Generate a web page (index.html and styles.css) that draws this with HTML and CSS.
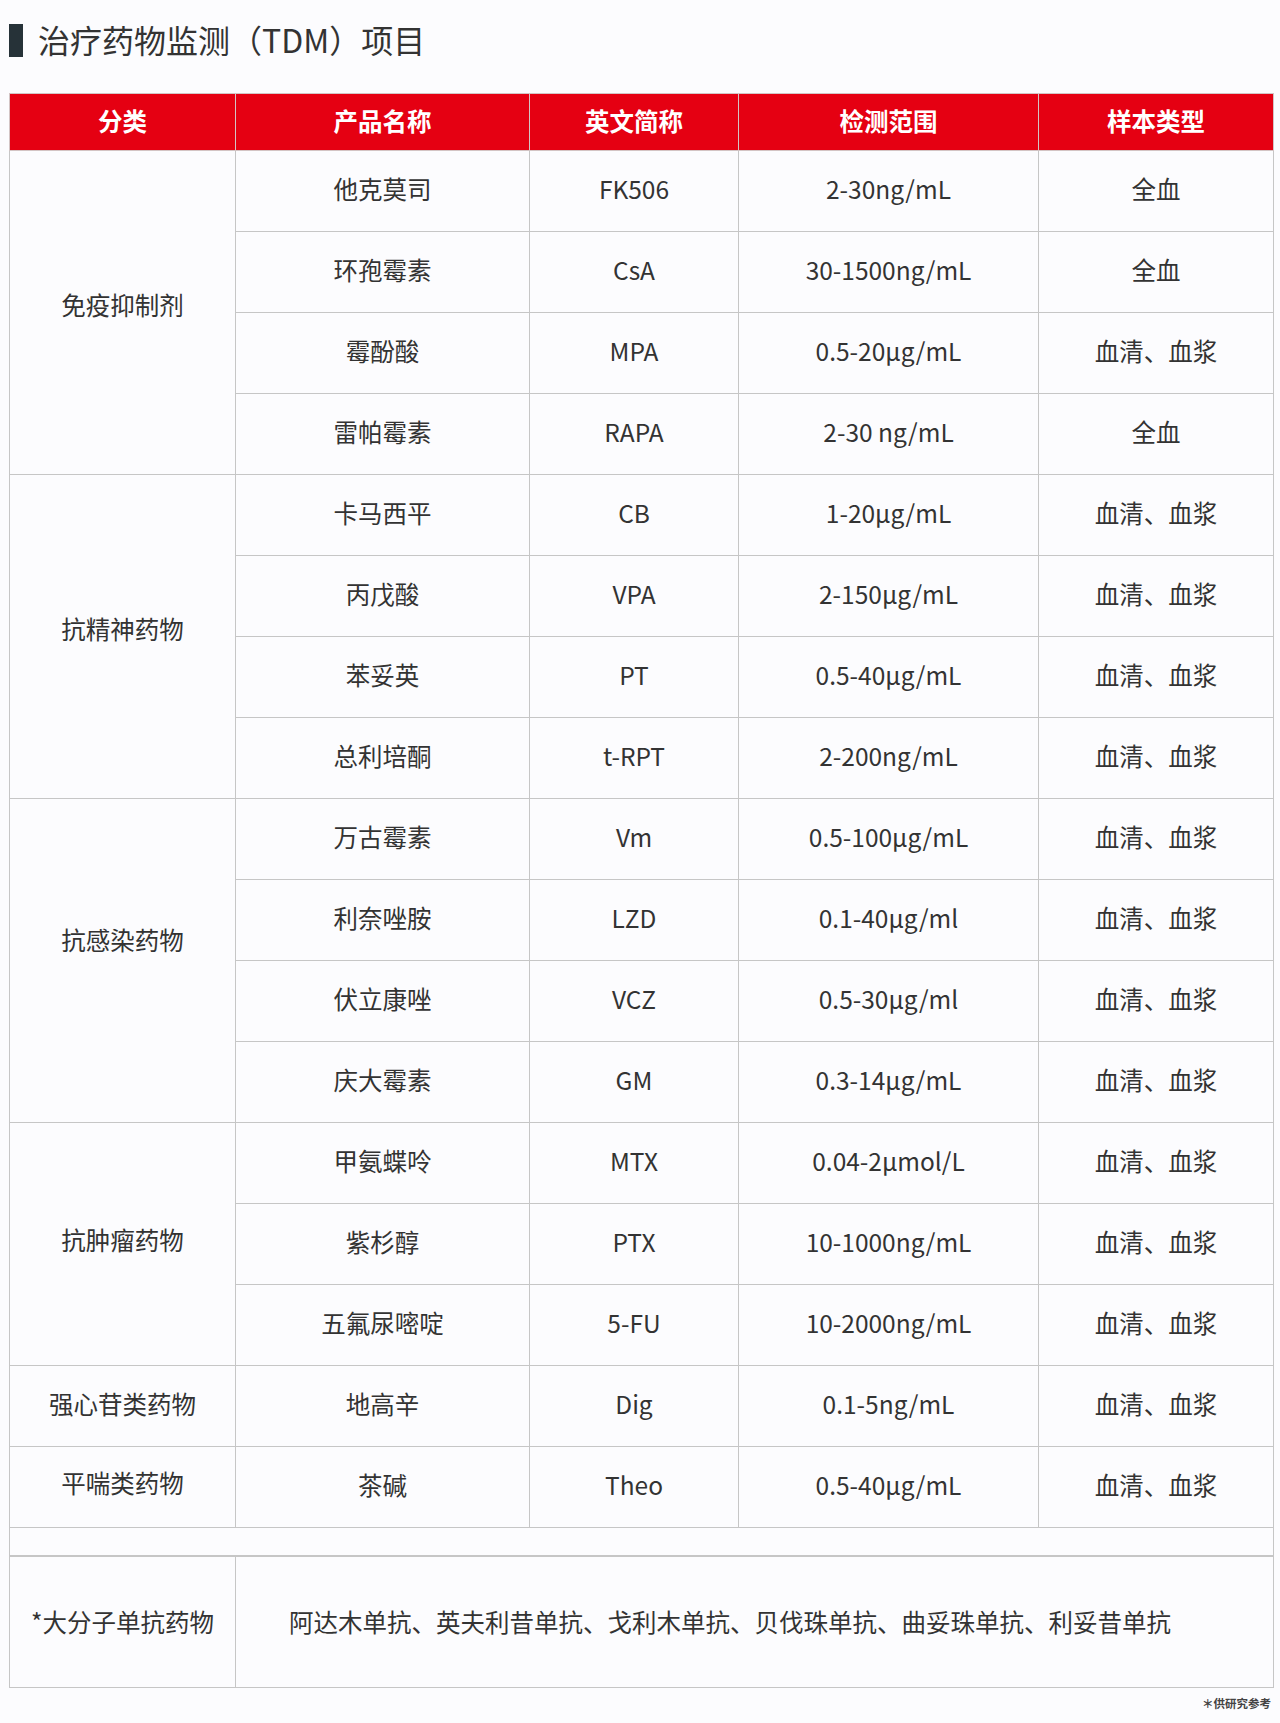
FILE: index.html
```html
<!DOCTYPE html>
<html lang="zh-CN">
<head>
<meta charset="utf-8">
<title>治疗药物监测（TDM）项目</title>
<link rel="stylesheet" href="styles.css">
</head>
<body>
<div class="page">
  <h1 class="title"><span class="title-bar"></span><span class="title-text">治疗药物监测（TDM）项目</span></h1>
  <table class="tdm">
    <colgroup>
      <col class="c1"><col class="c2"><col class="c3"><col class="c4"><col class="c5">
    </colgroup>
    <thead>
      <tr class="head"><th>分类</th><th>产品名称</th><th>英文简称</th><th>检测范围</th><th>样本类型</th></tr>
    </thead>
    <tbody>
      <tr class="row"><td rowspan="4" class="cat cat-a">免疫抑制剂</td><td>他克莫司</td><td>FK506</td><td>2-30ng/mL</td><td>全血</td></tr>
      <tr class="row"><td>环孢霉素</td><td>CsA</td><td>30-1500ng/mL</td><td>全血</td></tr>
      <tr class="row"><td>霉酚酸</td><td>MPA</td><td>0.5-20μg/mL</td><td>血清、血浆</td></tr>
      <tr class="row"><td>雷帕霉素</td><td>RAPA</td><td>2-30 ng/mL</td><td>全血</td></tr>
      <tr class="row"><td rowspan="4" class="cat cat-b">抗精神药物</td><td>卡马西平</td><td>CB</td><td>1-20μg/mL</td><td>血清、血浆</td></tr>
      <tr class="row"><td>丙戊酸</td><td>VPA</td><td>2-150μg/mL</td><td>血清、血浆</td></tr>
      <tr class="row"><td>苯妥英</td><td>PT</td><td>0.5-40μg/mL</td><td>血清、血浆</td></tr>
      <tr class="row"><td>总利培酮</td><td>t-RPT</td><td>2-200ng/mL</td><td>血清、血浆</td></tr>
      <tr class="row"><td rowspan="4" class="cat cat-c">抗感染药物</td><td>万古霉素</td><td>Vm</td><td>0.5-100μg/mL</td><td>血清、血浆</td></tr>
      <tr class="row"><td>利奈唑胺</td><td>LZD</td><td>0.1-40μg/ml</td><td>血清、血浆</td></tr>
      <tr class="row"><td>伏立康唑</td><td>VCZ</td><td>0.5-30μg/ml</td><td>血清、血浆</td></tr>
      <tr class="row"><td>庆大霉素</td><td>GM</td><td>0.3-14μg/mL</td><td>血清、血浆</td></tr>
      <tr class="row"><td rowspan="3" class="cat cat-d">抗肿瘤药物</td><td>甲氨蝶呤</td><td>MTX</td><td>0.04-2μmol/L</td><td>血清、血浆</td></tr>
      <tr class="row"><td>紫杉醇</td><td>PTX</td><td>10-1000ng/mL</td><td>血清、血浆</td></tr>
      <tr class="row"><td>五氟尿嘧啶</td><td>5-FU</td><td>10-2000ng/mL</td><td>血清、血浆</td></tr>
      <tr class="row"><td class="cat">强心苷类药物</td><td>地高辛</td><td>Dig</td><td>0.1-5ng/mL</td><td>血清、血浆</td></tr>
      <tr class="row"><td class="cat cat-f">平喘类药物</td><td>茶碱</td><td>Theo</td><td>0.5-40μg/mL</td><td>血清、血浆</td></tr>
      <tr class="spacer"><td colspan="5"></td></tr>
      <tr class="big"><td class="cat">*大分子单抗药物</td><td colspan="4" class="list">阿达木单抗、英夫利昔单抗、戈利木单抗、贝伐珠单抗、曲妥珠单抗、利妥昔单抗</td></tr>
    </tbody>
  </table>
  <p class="note">＊供研究参考</p>
</div>
</body>
</html>
```

FILE: styles.css
```css
html, body {
  margin: 0;
  padding: 0;
  background: #fcfcfe;
}

body {
  font-family: "Noto Sans CJK SC", "Noto Sans", sans-serif;
  color: #333333;
}

.page {
  width: 1280px;
  padding: 20px 0 0 9px;
  box-sizing: border-box;
}

.title {
  display: flex;
  align-items: center;
  margin: 0;
  height: 38px;
  font-size: 32px;
  font-weight: 400;
  color: #333333;
  line-height: 38px;
}

.title-bar {
  display: block;
  width: 14px;
  height: 33px;
  background: #263238;
  margin-right: 15px;
  position: relative;
  top: 1px;
}

.title-text {
  display: block;
  letter-spacing: 0;
}

.tdm {
  margin-top: 35px;
  width: 1264px;
  border-collapse: collapse;
  table-layout: fixed;
  font-size: 24.5px;
  line-height: 32px;
}

.c1 { width: 226px; }
.c2 { width: 294px; }
.c3 { width: 209px; }
.c4 { width: 300px; }
.c5 { width: 235px; }

.tdm th,
.tdm td {
  border: 1px solid #c6c6c6;
  text-align: center;
  vertical-align: middle;
  padding: 0;
}

.head th {
  height: 54px;
  padding-bottom: 2px;
  background: #e50012;
  color: #ffffff;
  font-weight: 700;
  border-color: #d3c4c4;
}

.row td {
  height: 76px;
  padding-bottom: 4px;
}

.row .cat-a { padding-bottom: 15px; }
.row .cat-b { padding-bottom: 16px; }
.row .cat-c { padding-bottom: 42px; }
.row .cat-d { padding-bottom: 8px; }
.row .cat-f { height: 71px; padding-bottom: 9px; }

.spacer td {
  height: 27px;
  border-bottom: 2px solid #c6c6c6;
}

.big td {
  height: 130px;
}

.big .list {
  text-align: left;
  padding-left: 53px;
}

.note {
  margin: 6px 0 0;
  width: 1262px;
  text-align: right;
  font-size: 11.5px;
  line-height: 18px;
  font-weight: 700;
  color: #444444;
}
```
